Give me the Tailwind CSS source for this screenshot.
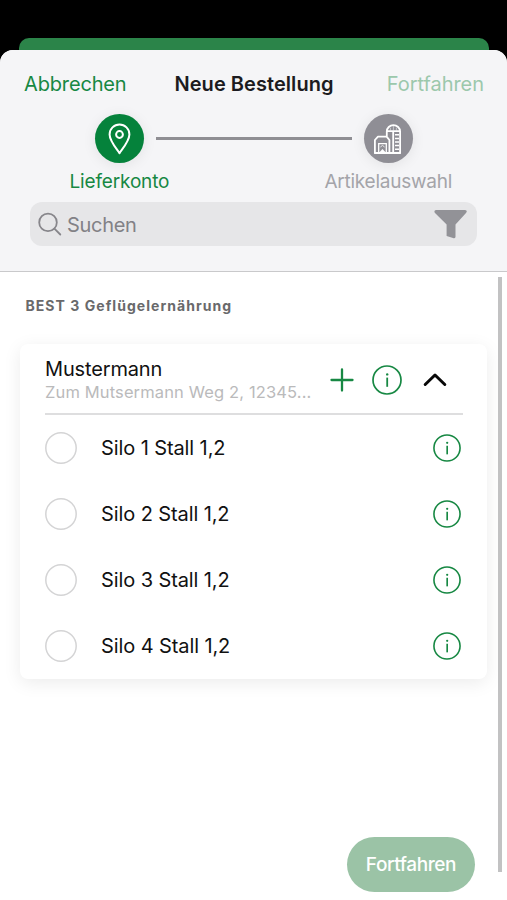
<!DOCTYPE html>
<html lang="de">
<head>
<meta charset="utf-8">
<meta name="viewport" content="width=device-width, initial-scale=1">
<title>Neue Bestellung</title>
<script src="https://cdn.jsdelivr.net/npm/@tailwindcss/browser@4"></script>
</head>
<body class="bg-black">
<svg class="hidden">
  <symbol id="info" viewBox="0 0 30 30">
    <circle cx="15" cy="15" r="14" fill="none" stroke="#178843" stroke-width="1.7"/>
    <path d="M15.2 12.6V21.8" stroke="#178843" stroke-width="1.8"/>
    <circle cx="15.2" cy="9.4" r="1.2" fill="#178843"/>
  </symbol>
  <symbol id="radio" viewBox="0 0 32 32">
    <circle cx="16" cy="16" r="15.2" fill="#fff" stroke="#d4d4d5" stroke-width="1.5"/>
  </symbol>
</svg>
<div class="w-[507px] h-[900px] bg-black flex flex-col overflow-hidden font-['Inter','Liberation_Sans',sans-serif] whitespace-nowrap">
  <div class="h-[50px] shrink-0 pt-[38px] pl-[19px] pr-[18px]">
    <div class="h-6 rounded-t-[10px] bg-[#2b8449]"></div>
  </div>
  <main class="relative flex-1 flex flex-col bg-white rounded-t-[13px] overflow-hidden">
    <header class="h-[222px] shrink-0 bg-[#f5f5f7] border-b border-[#c9c9cb]">
      <div class="h-[66px] pt-px pl-6 pr-[23px] grid grid-cols-[150.5px_1fr_150px] items-center text-[20px] leading-6">
        <span class="text-[#178843] tracking-[-0.15px]">Abbrechen</span>
        <span class="font-semibold text-[#1c1b20] tracking-[0.05px]">Neue Bestellung</span>
        <span class="text-right text-[#9cc8ac] tracking-[-0.05px]">Fortfahren</span>
      </div>
      <div class="-mt-[2px] pl-[95px] pr-[94px] flex items-center">
        <span class="size-[49px] rounded-full bg-[#05823b] shadow-[0_2px_14px_rgba(0,0,0,0.08)]">
          <svg class="size-[49px]" viewBox="0 0 49 49" fill="none" stroke="#fff" stroke-width="2">
            <path d="M24.5 39.2C22.6 36 14.6 27 14.6 20.4A9.9 9.9 0 0 1 34.4 20.4C34.4 27 26.4 36 24.5 39.2Z" stroke-linejoin="round"/>
            <circle cx="24.5" cy="20.5" r="3.4"/>
          </svg>
        </span>
        <span class="flex-1 h-[3px] ml-3 mr-3 bg-[#8f8e93]"></span>
        <span class="size-[49px] rounded-full bg-[#8f8e95] shadow-[0_2px_14px_rgba(0,0,0,0.08)]">
          <svg class="size-[49px]" viewBox="0 0 49 49" fill="none" stroke="#fff" stroke-width="1.8">
            <path d="M10.9 39V26L14 22.6H22.6L25.4 26V39" stroke-linejoin="round"/>
            <path d="M10.1 39H36.9"/>
            <path d="M14.7 39V29.6H22.3V39" stroke-width="1.3"/>
            <path d="M15 38.8L18.5 35L22 38.8Z" fill="#fff" stroke="none"/>
            <path d="M16.4 33L18.5 31.4L20.6 33" stroke-width=".8"/>
            <path d="M22.8 22.2V17.6C22.8 13.8 25.8 11.2 29.4 11.2S36.1 13.8 36.1 17.6V39M22.8 17.2H36M29.2 17.4V39"/>
            <path d="M31 20.8H35M31 24.4H35M31 28H35M31 31.6H35M31 35.2H35" stroke-width="1.5"/>
            <path d="M26.4 13.8V16.5M29.4 12V16.5M32.4 13.8V16.5" stroke-width=".5"/>
          </svg>
        </span>
      </div>
      <div class="h-[39px] pl-[69.5px] pr-[55px] pt-[7px] flex justify-between text-[19px] leading-6">
        <span class="text-[#178843] tracking-[-0.15px]">Lieferkonto</span>
        <span class="text-[#a4a4a9] tracking-[-0.25px]">Artikelauswahl</span>
      </div>
      <div class="ml-[30px] w-[447px] h-11 rounded-[12px] bg-[#e6e6e8] flex items-center pl-2 pr-[10px]">
        <svg class="size-[25px]" viewBox="0 0 25 25" fill="none" stroke="#87868b" stroke-width="1.8" stroke-linecap="round">
          <circle cx="10" cy="10.4" r="8.8"/><path d="M16.4 16.7L22.3 22.5"/>
        </svg>
        <span class="ml-1 pt-px flex-1 text-[20px] leading-6 tracking-[-0.3px] text-[#828186]">Suchen</span>
        <svg class="w-[33px] h-[30px]" viewBox="0 0 33 30" fill="#929297">
          <path d="M2 1H31Q34 1.5 32 4L21.5 15.5V28Q21 29.7 19 29L12.6 26.9V15.5L1 4Q-.6 1.5 2 1Z"/>
        </svg>
      </div>
    </header>
    <h2 class="mt-[24px] ml-[25.5px] h-5 text-[14px] leading-5 font-bold text-[#69696b] tracking-[1.05px]">BEST 3 Geflügelernährung</h2>
    <section class="mt-[28px] ml-5 w-[467px] h-[335px] shrink-0 rounded-[8px] bg-white shadow-[0_4px_18px_rgba(0,0,0,0.08)] pl-[25px] pr-6">
      <div class="h-[71px] border-b-2 border-[#dededf] flex">
        <div class="pt-[13px] w-[285px] shrink-0">
          <div class="text-[20px] leading-6 tracking-[-0.15px] text-[#111]">Mustermann</div>
          <div class="text-[16.5px] leading-[22px] tracking-[0.13px] text-[#bababb]">Zum Mutsermann Weg 2, 12345...</div>
        </div>
        <div class="flex items-center h-[72px]">
          <svg class="size-6" viewBox="0 0 24 24" stroke="#178843" stroke-width="2.3" stroke-linecap="round"><path d="M12 1.5V22.5M1.5 12H22.5"/></svg>
          <svg class="size-[30px] ml-[18px]"><use href="#info"/></svg>
          <svg class="w-6 h-4 ml-[20.5px]" viewBox="0 0 24 16" fill="none" stroke="#080808" stroke-width="3" stroke-linecap="round" stroke-linejoin="round"><path d="M2.2 12.5L12 3L21.8 12.5"/></svg>
        </div>
      </div>
      <div class="h-[66px] flex items-center text-[20px] tracking-[-0.1px] text-[#111]"><svg class="size-8 mr-6"><use href="#radio"/></svg><span class="flex-1">Silo 1 Stall 1,2</span><svg class="size-7 mr-[2px]"><use href="#info"/></svg></div>
      <div class="h-[66px] flex items-center text-[20px] tracking-[-0.1px] text-[#111]"><svg class="size-8 mr-6"><use href="#radio"/></svg><span class="flex-1">Silo 2 Stall 1,2</span><svg class="size-7 mr-[2px]"><use href="#info"/></svg></div>
      <div class="h-[66px] flex items-center text-[20px] tracking-[-0.1px] text-[#111]"><svg class="size-8 mr-6"><use href="#radio"/></svg><span class="flex-1">Silo 3 Stall 1,2</span><svg class="size-7 mr-[2px]"><use href="#info"/></svg></div>
      <div class="h-[66px] flex items-center text-[20px] tracking-[-0.1px] text-[#111]"><svg class="size-8 mr-6"><use href="#radio"/></svg><span class="flex-1">Silo 4 Stall 1,2</span><svg class="size-7 mr-[2px]"><use href="#info"/></svg></div>
    </section>
    <button class="mt-auto mb-[8px] ml-auto mr-8 w-[128px] h-[55px] rounded-full bg-[#9bc3a6] text-white font-medium text-[19px] tracking-[-0.4px] pt-px">Fortfahren</button>
    <div class="absolute left-[498px] top-[227px] w-1 h-[595px] bg-[#c2c2c3]"></div>
  </main>
</div>
</body>
</html>
